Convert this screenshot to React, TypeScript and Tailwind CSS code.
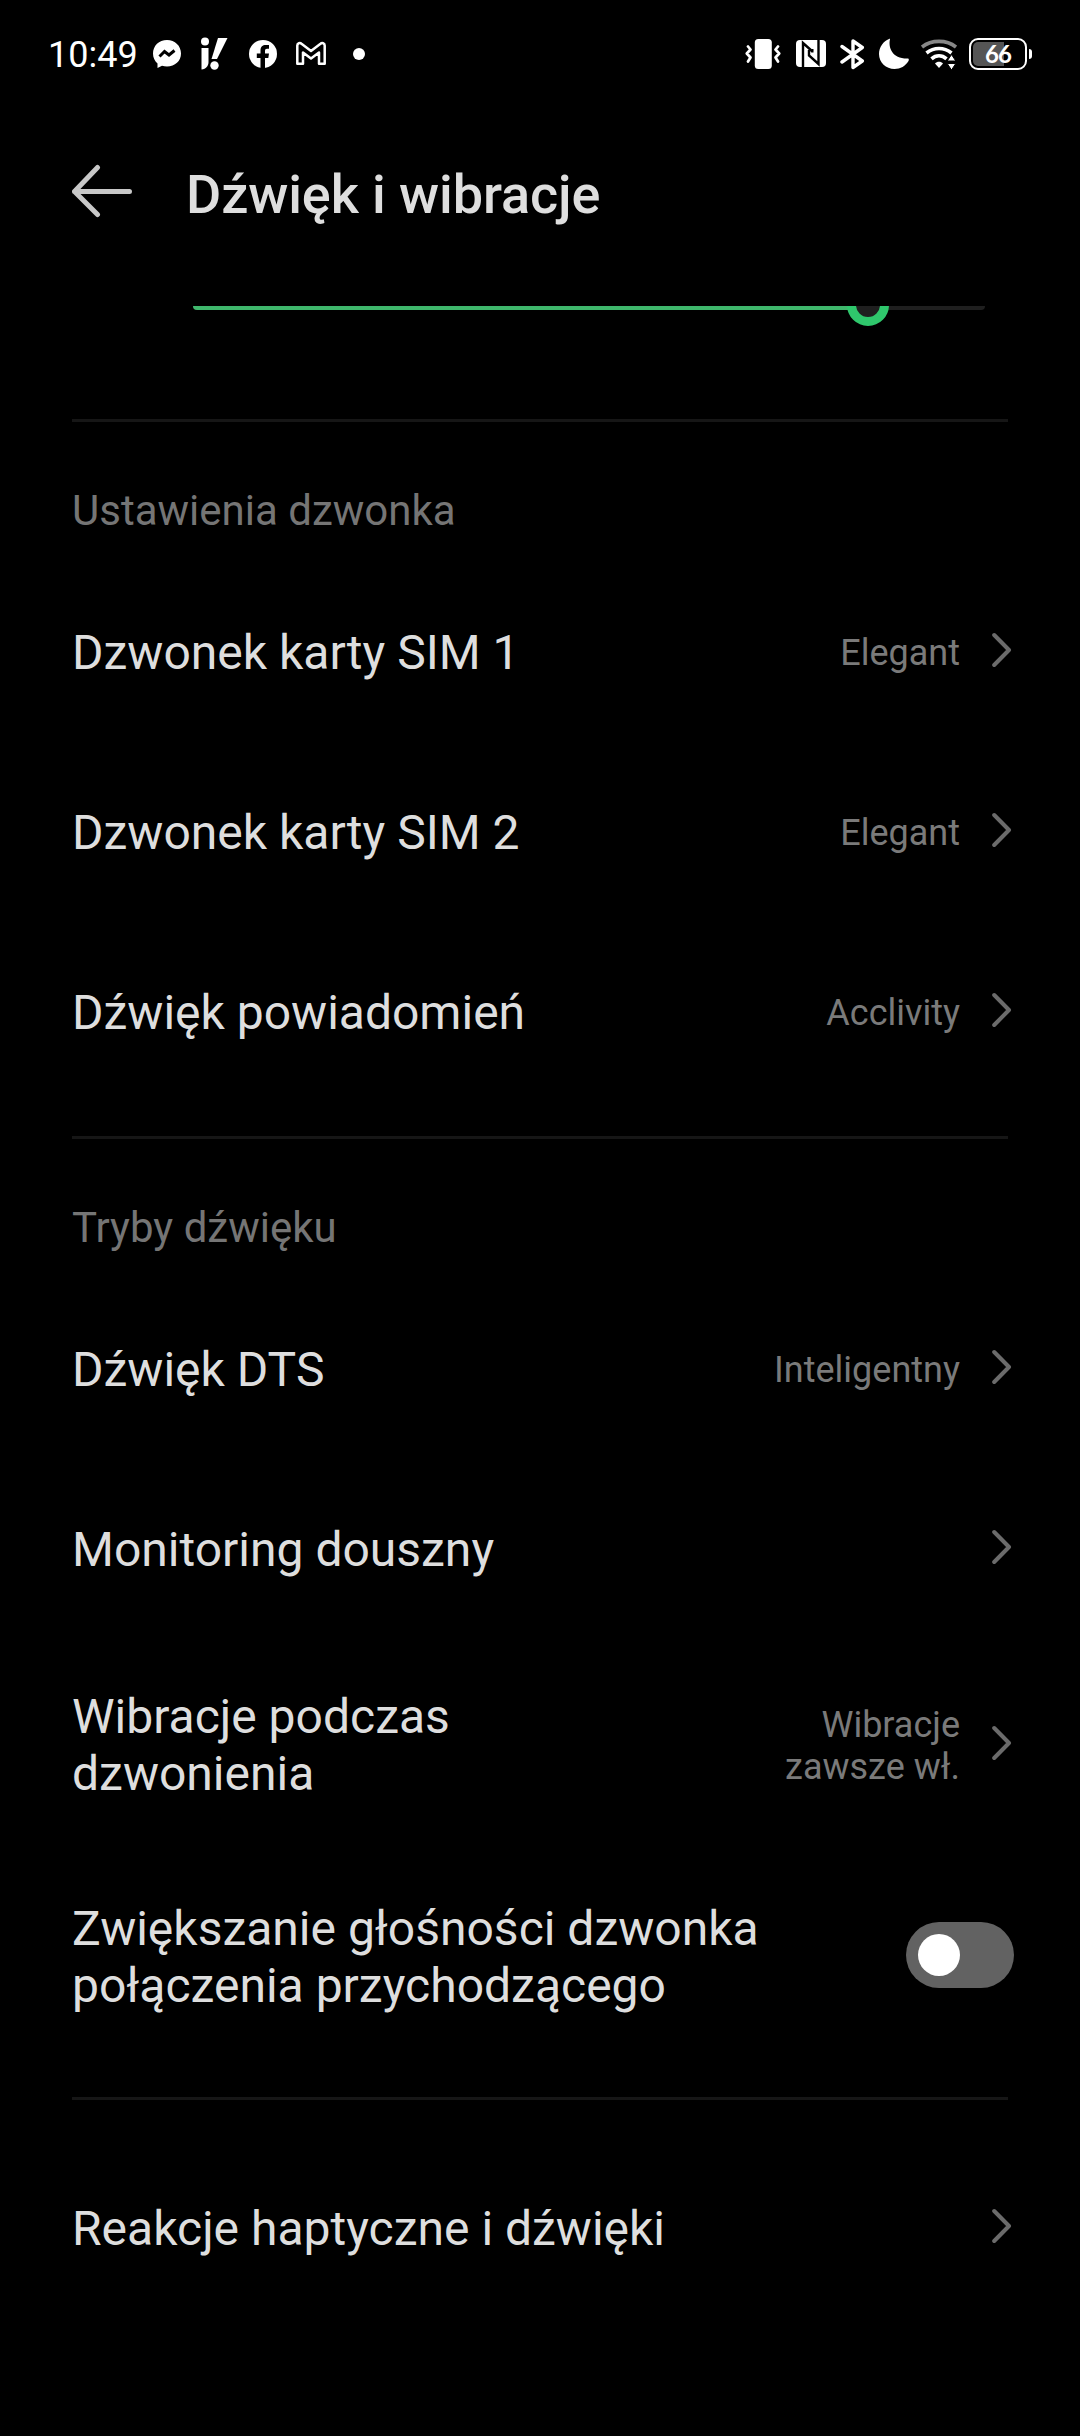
import { useState } from "react";

interface Item {
  label: string;
  value?: string;
}

const ringtones: Item[] = [
  { label: "Dzwonek karty SIM 1", value: "Elegant" },
  { label: "Dzwonek karty SIM 2", value: "Elegant" },
  { label: "Dźwięk powiadomień", value: "Acclivity" },
];

const soundModes: Item[] = [
  { label: "Dźwięk DTS", value: "Inteligentny" },
  { label: "Monitoring douszny" },
];

function StatusBar() {
  return (
    <div className="flex h-[108px] items-center pl-[48px] pr-[48px] text-white">
      <span className="w-[105px] pt-[2px] text-[36px] leading-[42px]">10:49</span>

      {/* messenger */}
      <svg width="28" height="36" viewBox="0 0 28 36" className="mr-[20px]">
        <path d="M14 4C6 4 0 9.800 0 17.500c0 4 1.700 7.500 4.500 10V32l4.500-2.300c1.600.5 3.200.7 5 .7 8 0 14-5.500 14-13S22 4 14 4Z" fill="currentColor" />
        <path d="M6.500 20.500 11.500 15.500 16 19 21.500 14.500" fill="none" stroke="#000" strokeWidth="3" />
      </svg>

      {/* i! */}
      <svg width="27" height="36" viewBox="0 0 27 36" className="mr-[21px]" fill="currentColor">
        <circle cx="4" cy="5.500" r="4" />
        <path d="M0.500 12H7.500V26C7.500 30 5 33 0.500 33.500Z" />
        <path d="M17 2H26.500L16 23H10.500Z" />
        <circle cx="13.500" cy="29.500" r="4.200" />
      </svg>

      {/* facebook */}
      <svg width="28" height="36" viewBox="0 0 28 36" className="mr-[19px]">
        <circle cx="14" cy="18" r="14" fill="currentColor" />
        <path d="M11.500 32V22H7.800V17.500H11.500V14.500C11.500 10.500 13.800 9 16.500 9H20V12.800H18C16.600 12.800 16 13.500 16 14.800V17.500H20L19.300 22H16V32Z" fill="#000" />
      </svg>

      {/* gmail */}
      <svg width="30" height="36" viewBox="0 0 30 36" className="mr-[27px]" fill="none" stroke="currentColor" strokeWidth="2.500" strokeLinejoin="round">
        <path d="M1.300 9.500C1.300 7 4 6.500 5.500 7.800L15 15 24.500 7.800C26 6.500 28.700 7 28.700 9.500V27.700H23V16.500L15 22.500 7 16.500V27.700H1.300Z" />
      </svg>

      <span className="size-3 rounded-full bg-white" />

      <div className="ml-auto flex items-center">
        {/* vibration */}
        <svg width="36" height="36" viewBox="0 0 36 36" className="mr-[15px]" fill="none" stroke="currentColor" strokeWidth="2.700" strokeLinecap="round" strokeLinejoin="round">
          <rect x="9.800" y="3" width="17" height="30" rx="3.500" fill="currentColor" stroke="none" />
          <path d="M3 10.500 5.500 13.500 1.800 17.500 5.500 21.500 3 25.500M33 10.500 30.500 13.500 34.200 17.500 30.500 21.500 33 25.500" />
        </svg>

        {/* nfc */}
        <svg width="30" height="36" viewBox="0 0 30 36" className="mr-[14px]">
          <rect y="4" width="30" height="27" rx="4" fill="currentColor" />
          <path d="M7 31V7L16.500 15.500M22.500 4V28L13 19.500V14" fill="none" stroke="#000" strokeWidth="2.400" />
          <path d="M16.500 16.500V13" fill="none" stroke="#000" strokeWidth="2" />
        </svg>

        {/* bluetooth */}
        <svg width="25" height="36" viewBox="0 0 25 36" className="mr-[14px]" fill="none" stroke="currentColor" strokeWidth="3.400" strokeLinecap="round" strokeLinejoin="round">
          <path d="M2 10.500 22.300 25 13 31.500V5L22.300 11.500 2 26" />
        </svg>

        {/* do not disturb */}
        <svg width="30" height="36" viewBox="0 0 30 36" className="mr-[12px]">
          <path d="M11 3C9 12 13.500 23 29 22.500C30 22.500 30 24 29.500 25C26.500 30 21.500 33 15.500 33C7 33 0 26.500 0 18C0 11 4.500 5 10 3C10.500 2.800 11 2.800 11 3Z" fill="currentColor" />
        </svg>

        {/* wifi */}
        <svg width="36" height="36" viewBox="0 0 36 36" className="mr-[12px]" fill="none" stroke="currentColor" strokeWidth="3.600">
          <path d="M1 11C10.500 3.500 25.500 3.500 35 11" stroke="#888" />
          <path d="M5.500 17C13 11 23 11 30.500 17" />
          <path d="M10.500 22.800C15 18.800 21 18.800 25.500 22.800" />
          <path d="M14 27.500C16 25 20 25 22 27.500L18 32Z" fill="currentColor" stroke="none" />
          <path d="M30.500 18.500 34.800 25H26.200ZM30.500 34 34.800 27.500H26.200Z" fill="currentColor" stroke="#000" strokeWidth="1" />
        </svg>

        <div className="flex h-8 w-[58px] items-center justify-center rounded-[9px] border-2 border-white bg-linear-to-r from-[#555] from-62% to-black to-62% bg-clip-content p-[2px]">
          <span className="font-['Lato',sans-serif] text-[24px] leading-[24px] font-bold tracking-[-1px]">66</span>
        </div>
        <span className="ml-[2px] h-[10px] w-[3px] rounded-r-sm bg-white" />
      </div>
    </div>
  );
}

function Chevron() {
  return (
    <svg width="20" height="36" viewBox="0 0 20 36" className="relative -top-[3px] ml-[32px] shrink-0" fill="none" stroke="#6b6b6b" strokeWidth="4" strokeLinecap="round" strokeLinejoin="round">
      <path d="M2.200 3 17 18 2.200 33" />
    </svg>
  );
}

function Row({ label, value }: Item) {
  return (
    <div className="flex h-[180px] items-center">
      <span className="text-[48px] leading-[56px]">{label}</span>
      <span className="ml-auto text-[36px] leading-[42px] text-[#7a7a7a]">{value}</span>
      <Chevron />
    </div>
  );
}

function SectionTitle({ children }: { children: string }) {
  return <h2 className="pt-[64px] pb-[28px] text-[42px] leading-[49px] text-[#757575]">{children}</h2>;
}

function Divider() {
  return <div className="mr-[4px] h-[3px] bg-[#161616]" />;
}

function App() {
  const [increasing, setIncreasing] = useState<boolean>(false);

  return (
    <div className="h-[2436px] w-[1080px] overflow-hidden bg-black font-['Roboto',sans-serif] text-[#dedede]">
      <StatusBar />

      <header className="flex h-[198px] items-start pt-[55px] pl-[72px]">
        <svg width="60" height="58" viewBox="0 0 60 58" className="mr-[54px]" fill="none" stroke="#c8c8c8" strokeWidth="5" strokeLinecap="round" strokeLinejoin="round">
          <path d="M25.500 4.500 2.500 28.500 25.500 51.500M2.500 28.500H57.500" />
        </svg>
        <h1 className="text-[54px] leading-[63px] font-medium tracking-[-0.1px]">Dźwięk i wibracje</h1>
      </header>

      <main>
        {/* volume slider, scrolled halfway under the header */}
        <div className="h-[113px] overflow-hidden pl-[193px]">
          <div className="relative -mt-[4px] h-[8px] w-[792px] rounded-full bg-[#1f1f1f]">
            <div className="h-full w-[675px] rounded-full bg-[#3fb76c]" />
            <div className="absolute -top-[18px] left-[654px] size-[42px] rounded-full border-9 border-[#2fc76c] bg-[#1f1f1f]" />
          </div>
        </div>

        <div className="pr-[68px] pl-[72px]">
          <Divider />
          <SectionTitle>Ustawienia dzwonka</SectionTitle>
          {ringtones.map((item) => (
            <Row key={item.label} label={item.label} value={item.value} />
          ))}

          <div className="h-[33px]" />
          <Divider />
          <SectionTitle>Tryby dźwięku</SectionTitle>
          {soundModes.map((item) => (
            <Row key={item.label} label={item.label} value={item.value} />
          ))}

          <div className="flex h-[212px] items-center">
            <span className="mb-[2px] w-[400px] text-[48px] leading-[57px]">Wibracje podczas dzwonienia</span>
            <span className="ml-auto w-[200px] text-right text-[36px] leading-[42px] text-[#7a7a7a]">Wibracje zawsze wł.</span>
            <Chevron />
          </div>

          <div className="flex h-[209px] items-center justify-between">
            <span className="w-[720px] text-[48px] leading-[57px]">Zwiększanie głośności dzwonka połączenia przychodzącego</span>
            <button
              type="button"
              role="switch"
              aria-checked={increasing}
              className={`-mr-[2px] mb-[3px] flex h-[66px] w-[108px] items-center rounded-full bg-[#626262] px-3 ${increasing ? "justify-end" : "justify-start"}`}
              onClick={() => setIncreasing(!increasing)}
            >
              <span className="size-[42px] rounded-full bg-white" />
            </button>
          </div>

          <div className="h-[36px]" />
          <Divider />
          <div className="h-[39px]" />
          <Row label="Reakcje haptyczne i dźwięki" />
        </div>
      </main>
    </div>
  );
}

export default App;
